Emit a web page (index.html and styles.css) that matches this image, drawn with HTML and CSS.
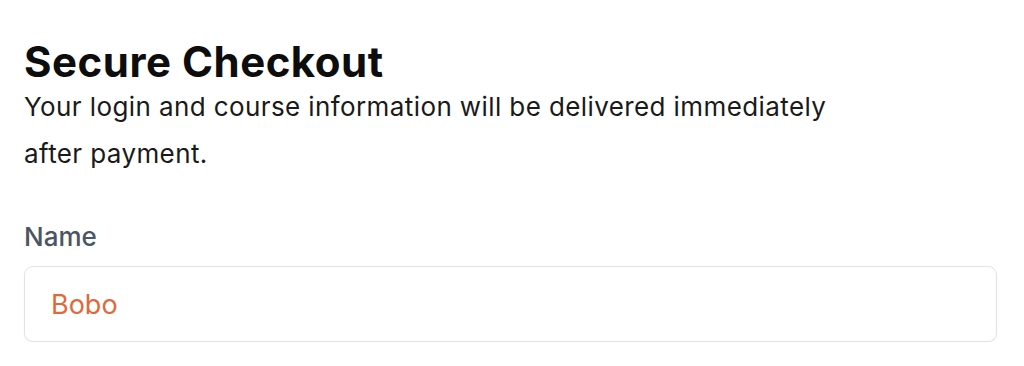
FILE: index.html
```html
<!DOCTYPE html>
<html lang="en">
<head>
  <meta charset="UTF-8" />
  <title>Secure Checkout</title>
  <meta name="viewport" content="width=device-width, initial-scale=1.0" />
  <link rel="stylesheet" href="styles.css">
</head>
<body>

<div class="checkout">
  <h1>Secure Checkout</h1>
  <p class="intro">Your login and course information will be delivered immediately after payment.</p>

  <form class="form">
    <label class="field">
      <span class="field-label">Name</span>
      <input class="field-input" type="text" value="Bobo" />
    </label>
  </form>
</div>

</body>
</html>
```

FILE: styles.css
```css
* { box-sizing: border-box; margin: 0; padding: 0; }
body { font-family: Inter, "Noto Sans", sans-serif; background: #fff; color: #111; }
.checkout {
  padding: 38px 27px 0 24px;
}
h1 {
  font-size: 42px;
  font-weight: 700;
  line-height: 48px;
  letter-spacing: 0.5px;
  color: #0d0d0d;
}
.intro {
  max-width: 850px;
  font-size: 26px;
  line-height: 47px;
  letter-spacing: 0.4px;
  margin-top: -3px;
  color: #1a1a1a;
}
.form {
  margin-top: 44px;
}
.field {
  display: flex;
  flex-direction: column;
  gap: 13px;
}
.field-label {
  font-size: 26px;
  font-weight: 500;
  color: #4b5563;
  line-height: 32px;
}
.field-input {
  height: 76px;
  width: 100%;
  padding: 0 26px;
  font-family: inherit;
  font-size: 27px;
  color: #e0693a;
  background: #fff;
  border: 1.5px solid #e2e3ea;
  border-radius: 9px;
  box-shadow: 0 1px 2px rgba(0,0,0,0.05);
  outline: none;
}
```
